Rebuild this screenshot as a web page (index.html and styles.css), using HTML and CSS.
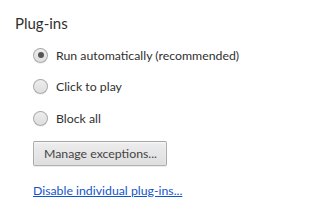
FILE: index.html
```html
<!DOCTYPE html>
<html lang="en">
<head>
    <meta charset="UTF-8">
    <title>Plug-ins</title>
    <link rel="stylesheet" href="styles.css">
</head>
<body>
    <!-- Plug-ins settings section -->
    <div class="section">
        <h3 class="section-title">Plug-ins</h3>
        <div class="options">
            <label class="radio-row">
                <input type="radio" name="plugins" checked>
                <span>Run automatically (recommended)</span>
            </label>
            <label class="radio-row">
                <input type="radio" name="plugins">
                <span>Click to play</span>
            </label>
            <label class="radio-row">
                <input type="radio" name="plugins">
                <span>Block all</span>
            </label>
            <div class="button-row">
                <button class="settings-button">Manage exceptions...</button>
            </div>
            <div class="link-row">
                <a href="#">Disable individual plug-ins...</a>
            </div>
        </div>
    </div>
</body>
</html>
```

FILE: styles.css
```css
body {
    margin: 0;
    background-color: #fff;
    font-family: Lato, "Open Sans", sans-serif;
    font-size: 12.3px;
    color: #303030;
}

/* Section */
.section {
    padding: 13px 0 0 15px;
}

.section-title {
    margin: 0;
    font-size: 15px;
    font-weight: normal;
    line-height: 20px;
    color: #303030;
}

.options {
    display: flex;
    flex-direction: column;
    padding: 14px 0 0 18px;
}

/* Radio rows */
.radio-row {
    display: flex;
    align-items: center;
    height: 16px;
    margin-bottom: 15.5px;
}

.radio-row input {
    -webkit-appearance: none;
    appearance: none;
    width: 15px;
    height: 15px;
    margin: 0 8px 0 0;
    border: 1px solid rgba(0, 0, 0, 0.25);
    border-radius: 50%;
    background: linear-gradient(#ededed, #dedede);
    box-shadow: 0 1px 0 rgba(0, 0, 0, 0.06);
    position: relative;
    flex-shrink: 0;
}

.radio-row input:checked::after {
    content: '';
    position: absolute;
    top: 3.5px;
    left: 3.5px;
    width: 6px;
    height: 6px;
    border-radius: 50%;
    background: #555;
}

/* Button */
.button-row {
    margin-top: -1px;
}

.settings-button {
    font-family: Lato, "Open Sans", sans-serif;
    font-size: 12.3px;
    color: #444;
    height: 25px;
    padding: 0 9px 0 10px;
    border: 1px solid rgba(0, 0, 0, 0.25);
    border-radius: 2px;
    background: linear-gradient(#ededed, #dedede);
    box-shadow: 0 1px 0 rgba(0, 0, 0, 0.08), inset 0 1px 2px rgba(255, 255, 255, 0.75);
}

/* Link */
.link-row {
    margin-top: 17px;
}

.link-row a {
    color: #15c;
    text-decoration: underline;
}
```
